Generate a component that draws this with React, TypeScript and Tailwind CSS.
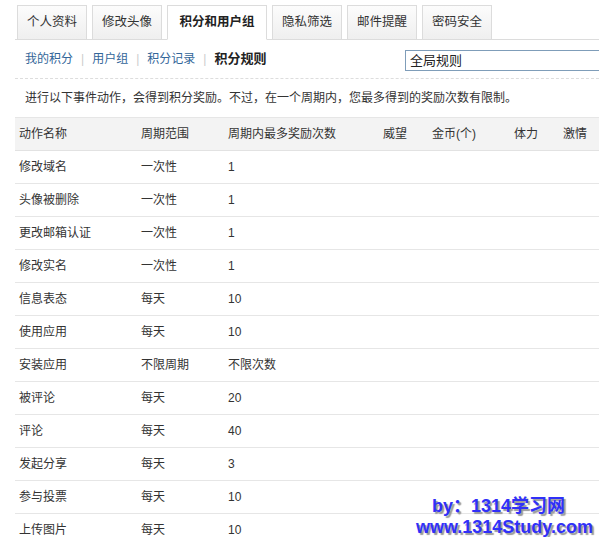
const TABS = [
  { label: "个人资料", w: "w-[70px]" },
  { label: "修改头像", w: "w-[70px]" },
  { label: "积分和用户组", w: "w-[100px]", active: true },
  { label: "隐私筛选", w: "w-[70px]" },
  { label: "邮件提醒", w: "w-[70px]" },
  { label: "密码安全", w: "w-[70px]" },
];

const SUBNAV = ["我的积分", "用户组", "积分记录"];

const ROWS: [string, string, string][] = [
  ["修改域名", "一次性", "1"],
  ["头像被删除", "一次性", "1"],
  ["更改邮箱认证", "一次性", "1"],
  ["修改实名", "一次性", "1"],
  ["信息表态", "每天", "10"],
  ["使用应用", "每天", "10"],
  ["安装应用", "不限周期", "不限次数"],
  ["被评论", "每天", "20"],
  ["评论", "每天", "40"],
  ["发起分享", "每天", "3"],
  ["参与投票", "每天", "10"],
  ["上传图片", "每天", "10"],
];

const COLS = ["w-[122px]", "w-[87px]", "w-[155px]", "w-[49px]", "w-[82px]", "w-[49px]", "w-[61px]"];
const HEAD = ["动作名称", "周期范围", "周期内最多奖励次数", "威望", "金币(个)", "体力", "激情"];

export default function App() {
  return (
    <div
      className="relative h-[537px] w-[599px] overflow-hidden bg-white text-[12px] text-[#333]"
      style={{ fontFamily: '"Liberation Sans", "Noto Sans CJK SC", sans-serif' }}
    >
      <div className="ml-[15px] pt-[5px]">
        {/* tabs */}
        <div className="flex gap-[5px] border-b border-[#dcdcdc] pl-[2px]">
          {TABS.map((t) => (
            <div
              key={t.label}
              className={`${t.w} -mb-px flex h-[35px] items-center justify-center border border-[#dcdcdc] text-[12.5px] ${
                t.active
                  ? "border-b-white bg-white font-bold text-[#222]"
                  : "bg-gradient-to-b from-[#fcfcfc] to-[#efefef]"
              }`}
            >
              {t.label}
            </div>
          ))}
        </div>

        {/* sub nav */}
        <div className="flex h-[39px] items-start border-b border-dashed border-[#dddddd]">
          <div className="flex h-[38px] items-center pl-[10px] text-[12px]">
            {SUBNAV.map((s) => (
              <span key={s} className="flex items-center">
                <span className="text-[#336699]">{s}</span>
                <span className="mx-[8px] text-[#cccccc]">|</span>
              </span>
            ))}
            <span className="text-[13px] font-bold text-[#222]">积分规则</span>
          </div>
          <div className="-mr-[10px] ml-auto mt-[10px] flex h-[21px] w-[204px] shrink-0 items-center border border-[#7f9db9] pl-[4px] text-[13px] text-[#222]">
            全局规则
          </div>
        </div>

        {/* description */}
        <p className="flex h-[38px] items-center pl-[10px] text-[12px]">
          进行以下事件动作，会得到积分奖励。不过，在一个周期内，您最多得到的奖励次数有限制。
        </p>

        {/* table */}
        <div className="border-t border-[#e6e6e6]">
          <div className="flex h-[33px] items-center border-b border-[#e2e2e2] bg-[#f3f3f3]">
            {HEAD.map((h, i) => (
              <div key={h} className={`${COLS[i]} shrink-0 pl-[4px]`}>
                {h}
              </div>
            ))}
          </div>
          {ROWS.map((r) => (
            <div key={r[0]} className="flex h-[33px] items-center border-b border-[#e6e6e6]">
              {r.map((c, i) => (
                <div key={i} className={`${COLS[i]} shrink-0 pl-[4px]`}>
                  {c}
                </div>
              ))}
            </div>
          ))}
        </div>
      </div>

      {/* watermark */}
      <div
        className="absolute right-[6px] top-[496px] flex flex-col items-end text-[18px] font-bold leading-[21px] text-[#3030f8]"
        style={{ fontFamily: '"Liberation Sans", "Noto Sans CJK SC", sans-serif', textShadow: "2px 2px 1px #9a9a9a" }}
      >
        <span className="mr-[28px]">by：1314学习网</span>
        <span>www.1314Study.com</span>
      </div>
    </div>
  );
}
